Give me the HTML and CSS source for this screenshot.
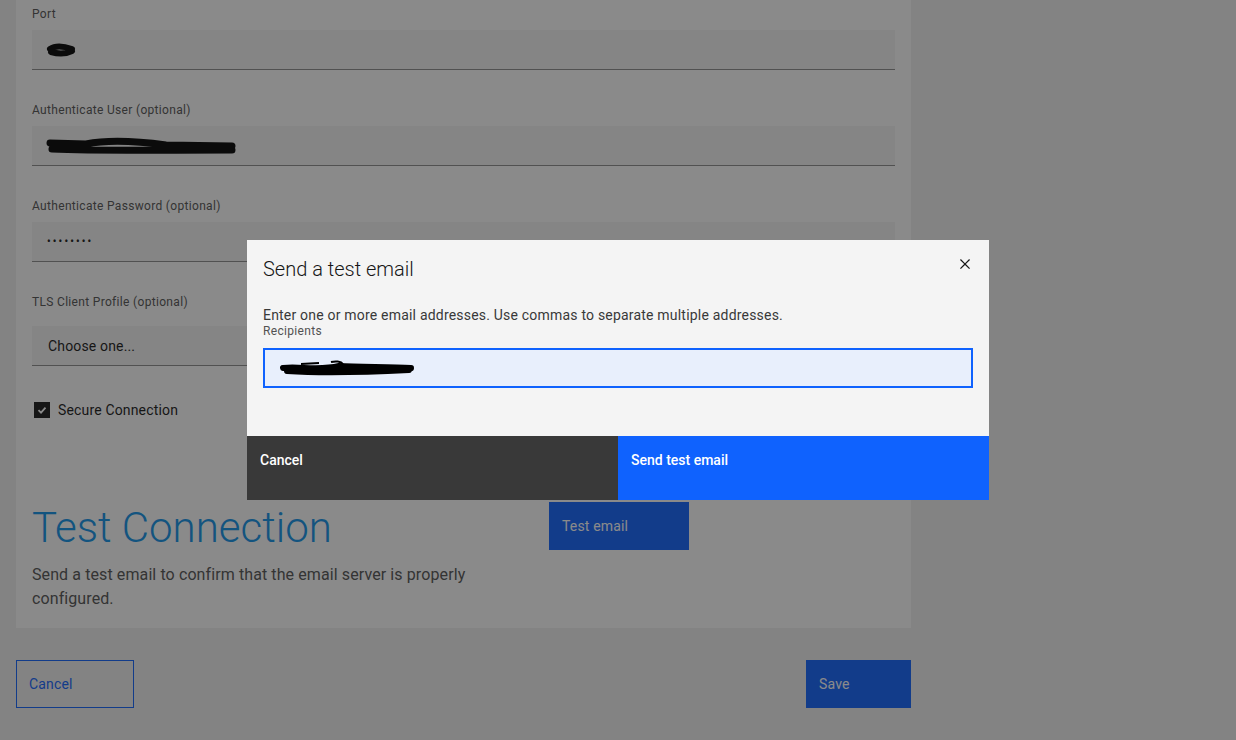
FILE: index.html
```html
<!DOCTYPE html>
<html lang="en">
<head>
<meta charset="utf-8">
<title>Email server settings</title>
<link rel="stylesheet" href="styles.css">
</head>
<body>
<div class="page">
  <section class="panel">
    <div class="field">
      <label class="label">Port</label>
      <div class="input">
        <svg class="redact" width="32" height="16" viewBox="0 0 32 16"><path d="M4 7 C10 3 20 5 26 7 M5 10 C12 12 20 12 26 9" stroke="#000" stroke-width="6" stroke-linecap="round" fill="none"/></svg>
      </div>
    </div>
    <div class="field">
      <label class="label">Authenticate User (optional)</label>
      <div class="input">
        <svg class="redact" width="192" height="22" viewBox="0 0 192 22"><path d="M4 8 L40 9 C60 5 90 6 120 10 L186 11 M6 14 C50 16 110 15 186 15" stroke="#000" stroke-width="7" stroke-linecap="round" fill="none"/></svg>
      </div>
    </div>
    <div class="field">
      <label class="label">Authenticate Password (optional)</label>
      <div class="input"><span class="value dots">&#8226;&#8226;&#8226;&#8226;&#8226;&#8226;&#8226;&#8226;</span></div>
    </div>
    <div class="field field-select">
      <label class="label">TLS Client Profile (optional)</label>
      <div class="input"><span class="value">Choose one...</span></div>
    </div>
    <div class="check-row">
      <span class="checkbox">
        <svg width="12" height="12" viewBox="0 0 12 12"><path d="M2.5 6.2 L5 8.6 L9.5 3.6" stroke="#fff" stroke-width="1.8" fill="none"/></svg>
      </span>
      <span class="check-label">Secure Connection</span>
    </div>
    <div class="test-section">
      <div class="test-text">
        <h2 class="test-title">Test Connection</h2>
        <p class="test-desc">Send a test email to confirm that the email server is properly configured.</p>
      </div>
      <button class="btn btn-primary btn-test">Test email</button>
    </div>
  </section>
  <div class="footer">
    <button class="btn btn-outline">Cancel</button>
    <button class="btn btn-primary btn-save">Save</button>
  </div>
</div>

<div class="overlay">
  <div class="modal">
    <div class="modal-header">
      <h3 class="modal-title">Send a test email</h3>
      <button class="modal-close" aria-label="Close">
        <svg width="20" height="20" viewBox="0 0 32 32"><path d="M24 9.4L22.6 8 16 14.6 9.4 8 8 9.4 14.6 16 8 22.6 9.4 24 16 17.4 22.6 24 24 22.6 17.4 16 24 9.4z" fill="#161616"/></svg>
      </button>
    </div>
    <div class="modal-body">
      <p class="modal-desc">Enter one or more email addresses. Use commas to separate multiple addresses.</p>
      <label class="modal-label">Recipients</label>
      <div class="modal-input">
        <svg class="redact-r" width="136" height="20" viewBox="0 0 136 20"><path d="M4 10 C20 8 40 13 60 8 C80 9 110 9 132 10 M8 13 C40 15 90 14 130 12" stroke="#000" stroke-width="6" stroke-linecap="round" fill="none"/><path d="M22 6 L40 5 M52 4 C56 3 62 3 64 6" stroke="#000" stroke-width="2" fill="none"/></svg>
      </div>
    </div>
    <div class="modal-footer">
      <button class="mbtn mbtn-secondary">Cancel</button>
      <button class="mbtn mbtn-primary">Send test email</button>
    </div>
  </div>
</div>
</body>
</html>
```
FILE: styles.css
```css
* { box-sizing: border-box; }

html, body {
  margin: 0;
  padding: 0;
}

body {
  background: #f0f0f0;
  font-family: Roboto, "Liberation Sans", sans-serif;
  color: #161616;
  height: 740px;
  overflow: hidden;
}

.page {
  padding: 0 16px;
  width: 927px;
}

.panel {
  background: #ffffff;
  padding: 6px 16px 17px 16px;
}

.field {
  margin-bottom: 32px;
}

.label {
  display: block;
  font-size: 12px;
  line-height: 16px;
  letter-spacing: 0.32px;
  color: #525252;
  margin-bottom: 8px;
}

.field-select {
  margin-bottom: 36px;
}

.field-select .label {
  margin-bottom: 16px;
}

.input {
  height: 40px;
  background: #f4f4f4;
  border-bottom: 1px solid #8d8d8d;
  display: flex;
  align-items: center;
  padding-left: 14px;
}

.value {
  font-size: 14px;
  letter-spacing: 0.16px;
  color: #161616;
  padding-left: 2px;
}

.dots {
  font-size: 10px;
  letter-spacing: 2.2px;
  font-weight: 700;
  padding-left: 1px;
}

.redact {
  display: block;
}

.check-row {
  display: flex;
  align-items: center;
  gap: 8px;
  padding-left: 2px;
  height: 16px;
}

.checkbox {
  width: 16px;
  height: 16px;
  background: #161616;
  display: flex;
  align-items: center;
  justify-content: center;
}

.checkbox svg { display: block; }

.check-label {
  font-size: 14px;
  letter-spacing: 0.16px;
  color: #161616;
}

.test-section {
  margin-top: 84px;
  display: grid;
  grid-template-columns: 517px 140px;
  align-items: start;
}

.test-title {
  margin: 1px 0 10px 0;
  font-size: 42px;
  line-height: 50px;
  font-weight: 300;
  color: #1192e8;
}

.test-desc {
  margin: 0;
  font-size: 16px;
  line-height: 24px;
  letter-spacing: 0.1px;
  color: #525252;
  max-width: 450px;
}

.btn {
  font-family: Roboto, "Liberation Sans", sans-serif;
  font-size: 14px;
  letter-spacing: 0.16px;
  height: 48px;
  border: none;
  text-align: left;
  padding: 0 13px;
  cursor: pointer;
}

.btn-primary {
  background: #0f62fe;
  color: #ffffff;
}

.btn-test { width: 140px; }

.footer {
  margin-top: 32px;
  display: flex;
  justify-content: space-between;
}

.btn-outline {
  width: 118px;
  background: transparent;
  border: 1px solid #0f62fe;
  color: #0f62fe;
  padding-left: 12px;
}

.btn-save { width: 105px; }

/* overlay + modal */
.overlay {
  position: fixed;
  inset: 0;
  background: rgba(22, 22, 22, 0.5);
  display: flex;
  align-items: center;
  justify-content: center;
}

.modal {
  width: 742px;
  height: 260px;
  background: #f4f4f4;
  display: flex;
  flex-direction: column;
}

.modal-header {
  display: flex;
  justify-content: space-between;
  align-items: flex-start;
  padding-left: 16px;
}

.modal-title {
  margin: 15px 0 0 0;
  font-size: 20px;
  line-height: 28px;
  font-weight: 300;
  color: #161616;
}

.modal-close {
  width: 48px;
  height: 48px;
  border: none;
  background: transparent;
  display: flex;
  align-items: center;
  justify-content: center;
  padding: 0 1px 0 0;
}

.modal-body {
  padding: 0 16px;
  margin-top: 19px;
}

.modal-desc {
  margin: 0;
  font-size: 14px;
  line-height: 16px;
  letter-spacing: 0.2px;
  color: #393939;
}

.modal-label {
  display: block;
  font-size: 12px;
  line-height: 16px;
  letter-spacing: 0.32px;
  color: #525252;
  margin-bottom: 9px;
}

.modal-input {
  height: 40px;
  border: 2px solid #0f62fe;
  background: #e8effc;
  display: flex;
  align-items: center;
  padding-left: 14px;
}

.redact-r { display: block; }

.modal-footer {
  margin-top: auto;
  height: 64px;
  display: flex;
}

.mbtn {
  flex: 1;
  border: none;
  text-align: left;
  font-family: Roboto, "Liberation Sans", sans-serif;
  font-size: 14px;
  font-weight: 500;
  color: #ffffff;
  padding: 0 13px;
  display: flex;
  align-items: flex-start;
  padding-top: 16px;
  line-height: 16px;
}

.mbtn-secondary { background: #393939; }
.mbtn-primary { background: #0f62fe; }
```
